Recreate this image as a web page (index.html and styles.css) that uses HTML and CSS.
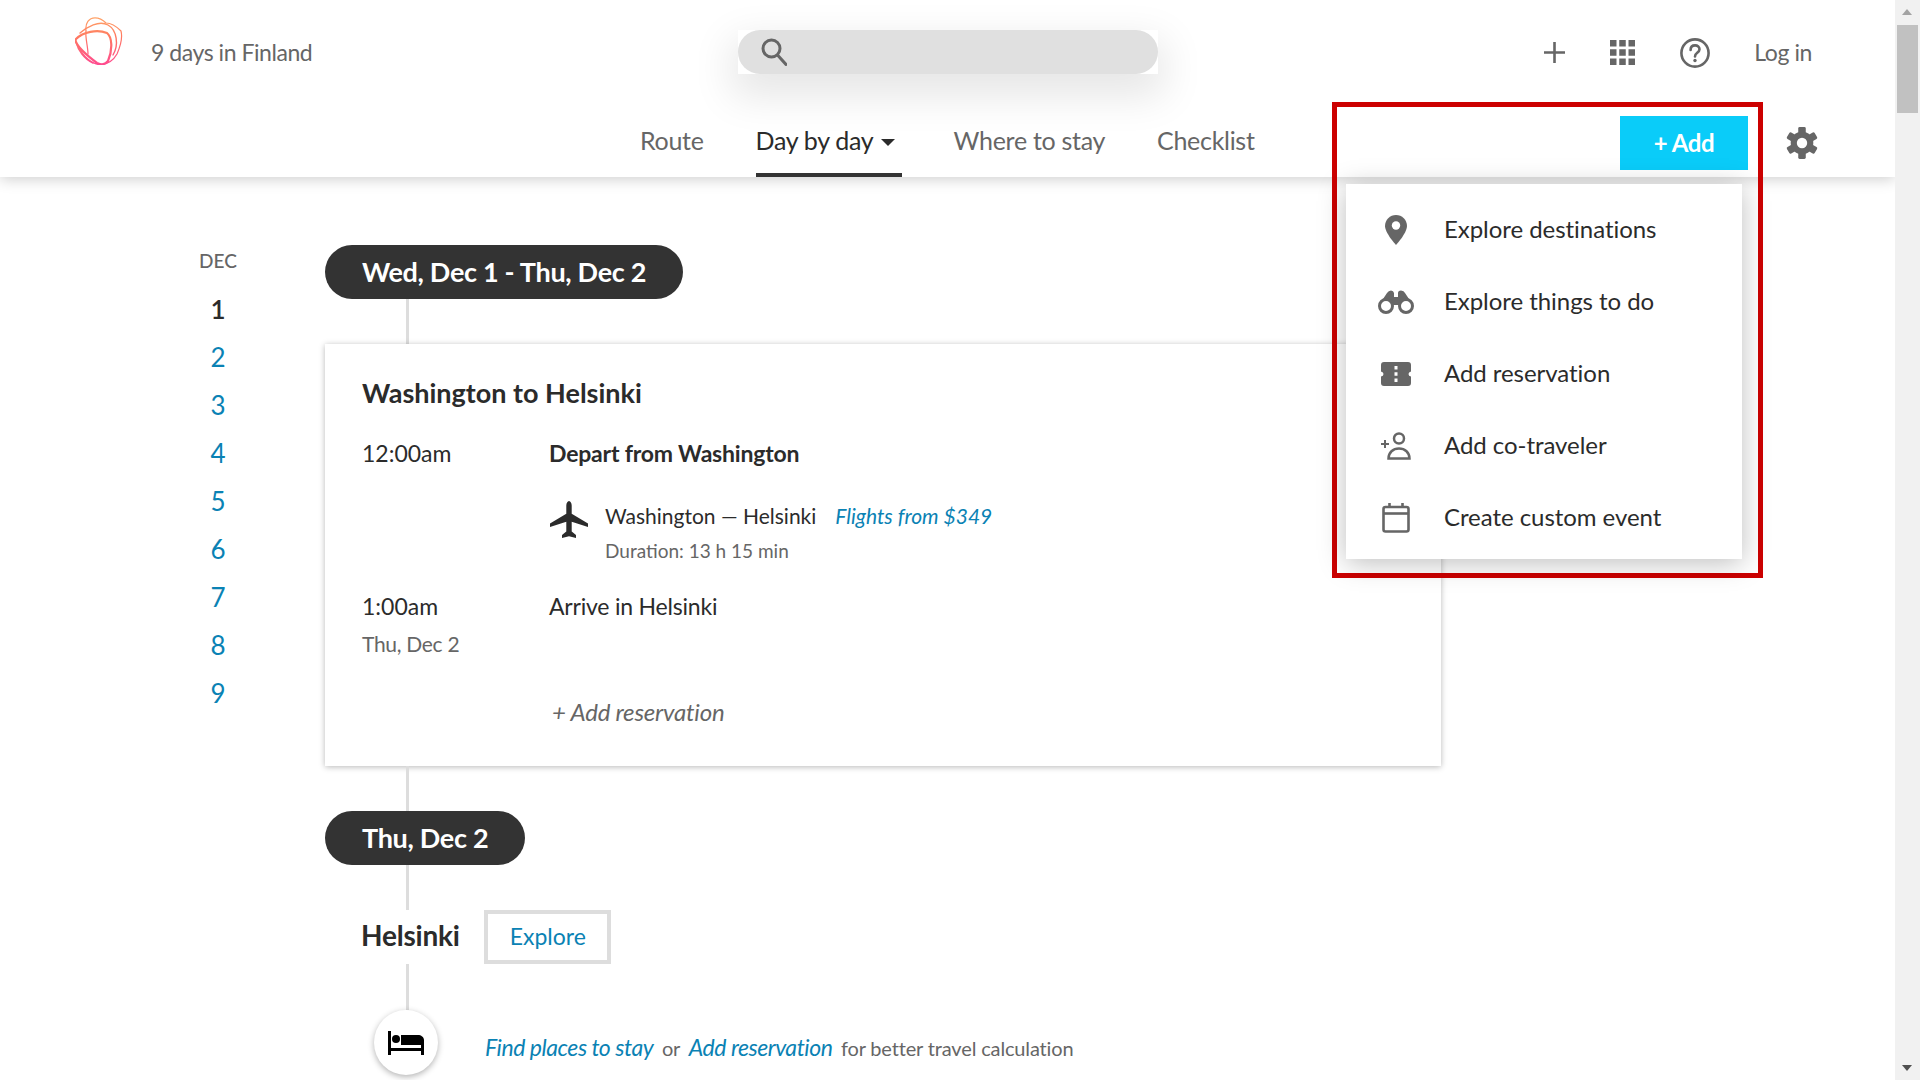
FILE: index.html
```html
<!DOCTYPE html>
<html lang="en">
<head>
<meta charset="utf-8">
<title>9 days in Finland</title>
<link rel="stylesheet" href="styles.css">
</head>
<body>
<div class="app">
  <div class="page">
    <header class="header">
      <div class="top-row">
        <svg class="logo" viewBox="0 0 48 48" fill="none">
          <defs><linearGradient id="lg" gradientUnits="userSpaceOnUse" x1="0" y1="0" x2="0" y2="48"><stop offset="0" stop-color="#ffa468"/><stop offset=".4" stop-color="#ff7a60"/><stop offset="1" stop-color="#ff4a90"/></linearGradient></defs>
          <g stroke="url(#lg)" stroke-linecap="round">
            <path stroke-width="2.2" d="M1 22C8 15 22 12 32 16C37 20 38 32 33 44C30 48 25 48 22 46C14 40 4 32 1 25C.5 24 .5 23 1 22Z"/>
            <path stroke-width="1.2" d="M11 14C10 6 14 .8 20 .8C25 .8 28 3 31 6C35 6 41 9 46 14C47.500 20 46 28 42 37C38 44 32 47.500 25 47.500C18 47.500 8 40 4 30"/>
            <path stroke-width="1.2" d="M11 14C10 20 13 30 13 37"/>
            <path stroke-width="1.400" d="M5 16C12 10 24 3 33 8C42 13 44 28 38 38"/>
            <path stroke-width="1.400" d="M1 25C3 33 9 42 18 46"/>
          </g>
        </svg>
        <span class="trip-title">9 days in Finland</span>
        <div class="search-wrap">
          <div class="search">
            <svg class="search-icon" viewBox="0 0 26 28" fill="none" stroke="#666" stroke-width="3"><circle cx="10.5" cy="10.5" r="8.5"/><path d="M16.5 17L25 26.5" stroke-linecap="round"/></svg>
          </div>
        </div>
        <div class="top-actions">
          <svg class="ic-plus" viewBox="0 0 21 21" fill="#666"><path d="M9.2 0h2.6v9.2H21v2.6h-9.2V21H9.2v-9.2H0V9.2h9.2z"/></svg>
          <svg class="ic-grid" viewBox="0 0 25 25" fill="#666"><path d="M0 0h6.500v6.500H0zM9.250 0h6.500v6.500h-6.500zM18.500 0H25v6.500h-6.500zM0 9.250h6.500v6.500H0zM9.250 9.250h6.500v6.500h-6.500zM18.500 9.250H25v6.500h-6.500zM0 18.500h6.500V25H0zM9.250 18.500h6.500V25h-6.500zM18.500 18.500H25V25h-6.500z"/></svg>
          <svg class="ic-help" viewBox="0 0 30 30" fill="none" stroke="#666" stroke-width="2.6"><circle cx="15" cy="15" r="13.6"/><path d="M10.6 12c0-3 2-4.6 4.500-4.600s4.400 1.600 4.400 3.900c0 3.500-4.500 3.600-4.500 7.100" stroke-linecap="round"/><circle cx="15" cy="22.500" r="1.700" fill="#666" stroke="none"/></svg>
          <span class="login">Log in</span>
        </div>
      </div>
      <div class="nav-row">
        <nav class="tabs">
          <a class="tab">Route</a>
          <a class="tab tab-active">Day by day <span class="caret"></span></a>
          <a class="tab">Where to stay</a>
          <a class="tab">Checklist</a>
        </nav>
        <button class="add-btn">+ Add</button>
        <svg class="ic-gear" viewBox="0 0 34 34" fill="#666"><g><rect x="13" y="0" width="8" height="34" rx="1.500"/><rect x="13" y="0" width="8" height="34" rx="1.500" transform="rotate(60 17 17)"/><rect x="13" y="0" width="8" height="34" rx="1.500" transform="rotate(120 17 17)"/></g><circle cx="17" cy="17" r="12"/><circle cx="17" cy="17" r="5.500" fill="#fff"/></svg>
      </div>
    </header>

    <main class="content">
      <aside class="dates">
        <div class="month">DEC</div>
        <a class="date date-current">1</a>
        <a class="date">2</a>
        <a class="date">3</a>
        <a class="date">4</a>
        <a class="date">5</a>
        <a class="date">6</a>
        <a class="date">7</a>
        <a class="date">8</a>
        <a class="date">9</a>
      </aside>
      <section class="timeline">
        <div class="pill">Wed, Dec 1 - Thu, Dec 2</div>
        <div class="connector"></div>
        <article class="card">
          <h2 class="card-title">Washington to Helsinki</h2>
          <div class="event event-first">
            <div class="time">12:00am</div>
            <div class="what strong">Depart from Washington</div>
          </div>
          <div class="flight">
            <svg class="ic-plane" viewBox="0 0 38 38" fill="#2b2b2b"><path d="M19 0c1.500 0 2.700 2.200 2.700 4.500v8.300L38 22.600v3.300l-16.300-5.200v9.900l4.300 3.300V37l-7-1.800-7 1.800v-3.100l4.300-3.300v-9.900L0 25.900v-3.300l16.300-9.800V4.500C16.300 2.200 17.500 0 19 0z"/></svg>
            <div class="flight-info">
              <div class="flight-line"><span>Washington — Helsinki</span><a class="link flights">Flights from $349</a></div>
              <div class="duration">Duration: 13 h 15 min</div>
            </div>
          </div>
          <div class="event">
            <div class="time">1:00am<div class="time-sub">Thu, Dec 2</div></div>
            <div class="what">Arrive in Helsinki</div>
          </div>
          <a class="add-res">+ Add reservation</a>
        </article>
        <div class="connector"></div>
        <div class="pill">Thu, Dec 2</div>
        <div class="connector"></div>
        <div class="place">
          <span class="place-name">Helsinki</span>
          <a class="explore">Explore</a>
        </div>
        <div class="connector connector-last"></div>
        <div class="stay">
          <div class="stay-circle">
            <svg class="ic-bed" viewBox="0 0 36 24" fill="#000"><path d="M0 0h3v17h30v-3H13V4h17c3 0 6 2 6 5v15h-3v-4H3v4H0z"/><circle cx="8" cy="8" r="4"/></svg>
          </div>
          <div class="stay-text"><a class="link stay-link">Find places to stay</a><span class="muted">or</span><a class="link stay-link">Add reservation</a><span class="muted">for better travel calculation</span></div>
        </div>
      </section>
    </main>

    <div class="callout">
      <div class="menu">
        <div class="menu-item">
          <span class="menu-icon"><svg width="22" height="30" viewBox="0 0 22 30"><path fill="#666" d="M11 0C5 0 0 4.800 0 11c0 7 11 19 11 19s11-12 11-19C22 4.800 17 0 11 0z"/><circle cx="11" cy="10.500" r="4.200" fill="#fff"/></svg></span>
          <span class="menu-label">Explore destinations</span>
        </div>
        <div class="menu-item">
          <span class="menu-icon"><svg width="36" height="24" viewBox="0 0 36 24"><path fill="#666" d="M1 15 9 3q1.500-2.500 4-2.500T16 3v4h4V3q0-2.500 3-2.500t4 2.500l8 12z"/><circle cx="8" cy="16" r="6.500" fill="#fff" stroke="#666" stroke-width="3"/><circle cx="28" cy="16" r="6.500" fill="#fff" stroke="#666" stroke-width="3"/></svg></span>
          <span class="menu-label">Explore things to do</span>
        </div>
        <div class="menu-item">
          <span class="menu-icon"><svg width="30" height="24" viewBox="0 0 30 24"><path fill="#666" d="M3 0h24q3 0 3 3v6.500q-2.500.5-2.500 2.500t2.500 2.500V21q0 3-3 3H3q-3 0-3-3v-6.500q2.500-.5 2.500-2.500T0 9.500V3q0-3 3-3z"/><path fill="#fff" d="M13.500 4h3v3.500h-3zM13.500 10.250h3v3.500h-3zM13.500 16.500h3V20h-3z"/></svg></span>
          <span class="menu-label">Add reservation</span>
        </div>
        <div class="menu-item">
          <span class="menu-icon"><svg width="30" height="28" viewBox="0 0 30 28" fill="none" stroke="#666" stroke-width="2.500"><circle cx="18" cy="6.500" r="5"/><path d="M7.500 26.500c0-6 4.500-10 10.500-10s10.500 4 10.500 10z"/><path stroke-width="2" d="M0 12h8M4 8v8"/></svg></span>
          <span class="menu-label">Add co-traveler</span>
        </div>
        <div class="menu-item">
          <span class="menu-icon"><svg width="28" height="30" viewBox="0 0 28 30" fill="none" stroke="#666" stroke-width="2.600"><rect x="1.500" y="4" width="25" height="24.500" rx="2"/><path d="M1.500 10.500h25"/><path d="M7.500 0v4M20.500 0v4"/></svg></span>
          <span class="menu-label">Create custom event</span>
        </div>
      </div>
    </div>
  </div>
  <div class="scrollbar" aria-hidden="true">
    <span class="arrow-up"></span>
    <span class="thumb"></span>
    <span class="arrow-down"></span>
  </div>
</div>
</body>
</html>
```

FILE: styles.css
```css
* { box-sizing: border-box; }
html, body { margin: 0; height: 100%; overflow: hidden; }
body { font-family: "Lato", "Liberation Sans", sans-serif; color: #2b2b2b; background: #fff; }
a { cursor: pointer; }

.app { display: flex; height: 1080px; overflow: hidden; }
.page { position: relative; flex: 1; min-width: 0; overflow: hidden; }

/* header */
.header { position: relative; height: 177px; background: #fff; box-shadow: 0 2px 14px rgba(0,0,0,.2); z-index: 2; }
.top-row { display: flex; align-items: center; height: 105px; padding-left: 75px; }
.logo { width: 48px; height: 48px; flex: none; margin-top: -23px; }
.trip-title { margin-left: 28px; margin-top: -2px; font-size: 23px; color: #666; letter-spacing: -.45px; }
.search-wrap { width: 420px; height: 44px; margin-left: 426px; margin-top: -1px; background: #fff; box-shadow: 0 16px 40px 6px rgba(0,0,0,.1); }
.search { height: 44px; border-radius: 22px; background: #e0e0e0; display: flex; align-items: center; padding-left: 23px; }
.search-icon { width: 26px; height: 28px; }
.top-actions { display: flex; align-items: center; margin-left: auto; padding-right: 83px; }
.ic-plus { width: 21px; height: 21px; }
.ic-grid { width: 25px; height: 25px; margin-left: 45px; }
.ic-help { width: 30px; height: 30px; margin-left: 45px; }
.login { margin-left: 44px; margin-top: -2px; font-size: 23px; color: #666; letter-spacing: -.4px; }

.nav-row { display: flex; align-items: flex-start; height: 72px; padding: 0 77px 0 640px; }
.tabs { display: flex; gap: 52px; height: 72px; }
.tab { display: block; height: 72px; padding-top: 20px; font-size: 25px; line-height: 30px; color: #666; letter-spacing: -.3px; white-space: nowrap; }
.tab-active { color: #2b2b2b; border-bottom: 4px solid #333; width: 146px; }
.caret { display: inline-block; width: 0; height: 0; margin-left: 2px; vertical-align: 4px; border-left: 7.500px solid transparent; border-right: 7.500px solid transparent; border-top: 7px solid #2b2b2b; }
.add-btn { position: relative; z-index: 4; width: 128px; height: 54px; margin: 11px 0 0 auto; padding: 0 0 2px; border: 0; background: #0accf9; color: #fff; font: 700 24px "Lato", sans-serif; letter-spacing: -.4px; }
.ic-gear { position: relative; width: 32px; height: 32px; margin: 22px 0 0 38px; flex: none; }

/* content */
.content { display: flex; padding-top: 68px; }
.dates { width: 325px; flex: none; padding-left: 188px; display: flex; flex-direction: column; }
.month { width: 60px; font-size: 19px; font-weight: 500; line-height: 24px; text-align: center; color: #666; margin-top: 4px; margin-bottom: 12px; }
.date { width: 60px; height: 48px; text-align: center; font-size: 26px; line-height: 48px; color: #0a82b4; }
.date-current { color: #2b2b2b; font-weight: 600; }

.timeline { display: flex; flex-direction: column; align-items: flex-start; }
.pill { height: 54px; padding: 0 37px; border-radius: 27px; background: #333; color: #fff; font-size: 27px; font-weight: 700; line-height: 54px; letter-spacing: -.3px; white-space: nowrap; }
.connector { width: 3px; height: 45px; margin-left: 81px; background: #ddd; }
.connector-last { height: 46px; }

.card { width: 1116px; height: 422px; padding: 30px 37px 0; background: #fff; box-shadow: 0 1px 6px rgba(0,0,0,.28); }
.card-title { margin: 0; font-size: 27px; line-height: 38px; font-weight: 700; letter-spacing: 0; }
.event { display: flex; }
.event-first { margin-top: 26px; }
.time { width: 187px; font-size: 23px; line-height: 30px; letter-spacing: 0; }
.time-sub { margin-top: 8px; font-size: 21px; line-height: 30px; color: #666; letter-spacing: -.3px; }
.what { font-size: 23px; line-height: 30px; letter-spacing: -.2px; }
.strong { font-weight: 700; }
.flight { display: flex; margin: 33px 0 0 187px; }
.ic-plane { width: 38px; height: 38px; flex: none; margin: 0 17px 0 1px; }
.flight-info { display: flex; flex-direction: column; }
.flight-line { display: flex; font-size: 21px; line-height: 30px; }
.link { color: #0a82b4; font-style: italic; }
.flights { margin-left: 19px; }
.duration { margin-top: 5px; font-size: 19px; line-height: 30px; color: #666; }
.flight + .event { margin-top: 25px; }
.add-res { display: block; margin: 38px 0 0 190px; font-size: 24px; line-height: 30px; font-style: italic; color: #666; letter-spacing: -.2px; }

.place { display: flex; align-items: center; padding-left: 36px; height: 54px; }
.place-name { margin-top: -4px; font-size: 28px; font-weight: 700; letter-spacing: -.2px; }
.explore { width: 127px; height: 54px; margin-left: 24px; padding-left: 1px; border: 4px solid #ddd; text-align: center; font-size: 23px; line-height: 44px; color: #0a82b4; }

.stay { display: flex; align-items: center; padding-left: 49px; }
.stay-circle { width: 64px; height: 65px; flex: none; border-radius: 50%; background: #fff; box-shadow: 0 2px 6px rgba(0,0,0,.3); display: flex; align-items: center; justify-content: center; }
.ic-bed { width: 36px; height: 24px; }
.stay-text { display: flex; align-items: baseline; margin: 10px 0 0 47px; font-size: 23px; line-height: 30px; white-space: nowrap; letter-spacing: -.45px; }
.muted { margin: 0 8.500px; font-size: 20px; font-style: normal; color: #666; letter-spacing: -.15px; }
.muted:last-child { margin-right: 0; }

/* highlighted dropdown */
.callout { position: absolute; left: 1332px; top: 102px; width: 431px; height: 476px; border: 5px solid #c00; z-index: 3; }
.menu { position: absolute; left: 9px; top: 77px; width: 396px; padding: 10px 0 5px; background: #fff; box-shadow: 0 4px 26px rgba(0,0,0,.26); }
.menu-item { display: flex; align-items: center; height: 72px; font-size: 24px; color: #2b2b2b; }
.menu-label { margin-top: -4px; letter-spacing: -.05px; }
.menu-icon { display: flex; justify-content: center; width: 98px; padding-left: 2px; }

/* scrollbar */
.scrollbar { position: relative; width: 25px; flex: none; background: #f1f1f1; }
.thumb { position: absolute; left: 2px; right: 2px; top: 25px; height: 88px; background: #c1c1c1; }
.arrow-up, .arrow-down { position: absolute; left: 7px; width: 0; height: 0; border-left: 5.500px solid transparent; border-right: 5.500px solid transparent; }
.arrow-up { top: 9px; border-bottom: 6px solid #a3a3a3; }
.arrow-down { bottom: 9px; border-top: 6px solid #505050; }
```
